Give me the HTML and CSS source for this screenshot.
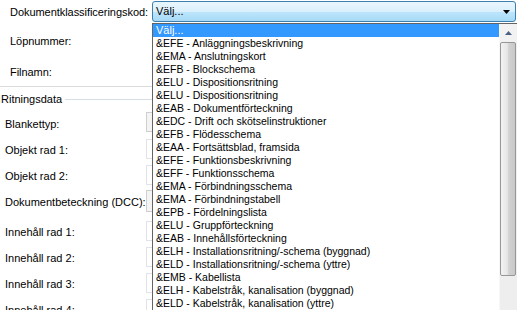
FILE: index.html
```html
<!DOCTYPE html>
<html>
<head>
<meta charset="utf-8">
<link rel="stylesheet" href="styles.css">
</head>
<body>
<div class="form">
  <div class="row r1">
    <span class="lbl top-lbl">Dokumentklassificeringskod:</span>
    <div class="combo">
      <span class="combo-text">Välj...</span>
      <svg class="arrow" width="7" height="4" viewBox="0 0 7 4"><path d="M0 0H7L3.5 4Z" fill="#000"/></svg>
    </div>
  </div>
  <div class="row r2">
    <span class="lbl top-lbl">Löpnummer:</span>
  </div>
  <div class="row r3">
    <span class="lbl top-lbl">Filnamn:</span>
  </div>
  <div class="sep"></div>
  <div class="group">
    <div class="legend"><span class="legend-text">Ritningsdata</span><span class="legend-line"></span></div>
    <div class="grow"><span class="lbl in-lbl">Blankettyp:</span><span class="field grey"></span></div>
    <div class="grow"><span class="lbl in-lbl">Objekt rad 1:</span><span class="field"></span></div>
    <div class="grow"><span class="lbl in-lbl">Objekt rad 2:</span><span class="field"></span></div>
    <div class="grow"><span class="lbl in-lbl">Dokumentbeteckning (DCC):</span><span class="field grey tall"></span></div>
    <div class="grow gap"><span class="lbl in-lbl">Innehåll rad 1:</span><span class="field"></span></div>
    <div class="grow"><span class="lbl in-lbl">Innehåll rad 2:</span><span class="field"></span></div>
    <div class="grow"><span class="lbl in-lbl">Innehåll rad 3:</span><span class="field"></span></div>
    <div class="grow"><span class="lbl in-lbl">Innehåll rad 4:</span><span class="field"></span></div>
  </div>
</div>

<div class="dropdown">
  <ul class="items">
    <li class="sel">Välj...</li>
    <li>&amp;EFE - Anläggningsbeskrivning</li>
    <li>&amp;EMA - Anslutningskort</li>
    <li>&amp;EFB - Blockschema</li>
    <li>&amp;ELU - Dispositionsritning</li>
    <li>&amp;ELU - Dispositionsritning</li>
    <li>&amp;EAB - Dokumentförteckning</li>
    <li>&amp;EDC - Drift och skötselinstruktioner</li>
    <li>&amp;EFB - Flödesschema</li>
    <li>&amp;EAA - Fortsättsblad, framsida</li>
    <li>&amp;EFE - Funktionsbeskrivning</li>
    <li>&amp;EFF - Funktionsschema</li>
    <li>&amp;EMA - Förbindningsschema</li>
    <li>&amp;EMA - Förbindningstabell</li>
    <li>&amp;EPB - Fördelningslista</li>
    <li>&amp;ELU - Gruppförteckning</li>
    <li>&amp;EAB - Innehållsförteckning</li>
    <li>&amp;ELH - Installationsritning/-schema (byggnad)</li>
    <li>&amp;ELD - Installationsritning/-schema (yttre)</li>
    <li>&amp;EMB - Kabellista</li>
    <li>&amp;ELH - Kabelstråk, kanalisation (byggnad)</li>
    <li>&amp;ELD - Kabelstråk, kanalisation (yttre)</li>
  </ul>
  <div class="scrollbar">
    <div class="sb-up"><svg width="7" height="4" viewBox="0 0 7 4"><path d="M0 4H7L3.5 0Z" fill="#4d6185"/></svg></div>
    <div class="sb-thumb"></div>
    <div class="sb-track"></div>
  </div>
</div>
</body>
</html>
```

FILE: styles.css
```css
html, body {
  margin: 0;
  padding: 0;
  background: #ffffff;
  width: 517px;
  height: 310px;
  overflow: hidden;
  font-family: "Liberation Sans", Arial, sans-serif;
  font-size: 11px;
  color: #000;
}

.form {
  display: flex;
  flex-direction: column;
  width: 517px;
}

.row {
  display: flex;
  align-items: flex-start;
}
.r1 { height: 29px; }
.r2 { height: 31px; }
.r3 { height: 26px; }

.lbl {
  line-height: 13px;
  white-space: nowrap;
}
.top-lbl {
  padding-top: 6px;
  padding-left: 10px;
  width: 152px;
  flex: none;
  box-sizing: border-box;
  letter-spacing: -0.05px;
}

.combo {
  margin-top: 1px;
  width: 364px;
  height: 21px;
  box-sizing: border-box;
  border: 1px solid #3c7fb1;
  border-radius: 3px;
  background: linear-gradient(to bottom, #eaf6fd 0%, #d9f0fc 50%, #bee6fd 51%, #a7d9f5 100%);
  display: flex;
  align-items: center;
  justify-content: space-between;
  padding: 0 5px 0 3px;
}
.combo-text {
  line-height: 13px;
}
.arrow { display: block; }

.sep {
  height: 1px;
  width: 152px;
  background: #dcdcdc;
}

.group {
  display: flex;
  flex-direction: column;
  margin-top: 6px;
}
.legend {
  display: flex;
  align-items: center;
  height: 13px;
  width: 152px;
}
.legend-text {
  line-height: 13px;
  padding-left: 1px;
  padding-right: 3px;
}
.legend-line {
  flex: 1;
  height: 1px;
  background: #d5dfe5;
}

.grow {
  display: flex;
  align-items: flex-start;
  height: 26px;
}
.grow:nth-child(2) { margin-top: 5px; }
.grow.gap { margin-top: 4px; }

.in-lbl {
  padding-top: 7px;
  padding-left: 5px;
  width: 146px;
  flex: none;
  box-sizing: border-box;
}
.field {
  display: block;
  width: 200px;
  height: 20px;
  box-sizing: border-box;
  border: 1px solid #e2e3ea;
  background: #fff;
  margin-top: 2px;
}
.field.grey {
  background: #f4f4f4;
  border-color: #cfcfcf;
  margin-top: 1px;
  height: 20px;
}
.field.tall { height: 22px; }

.dropdown {
  position: absolute;
  left: 152px;
  top: 23px;
  width: 366px;
  height: 300px;
  box-sizing: border-box;
  border: 1px solid #646464;
  background: #fff;
  display: flex;
}
.items {
  list-style: none;
  margin: 0;
  padding: 0;
  flex: 1;
  font-size: 10.5px;
}
.items li {
  height: 13px;
  line-height: 13px;
  padding-left: 3px;
  white-space: nowrap;
}
.items li.sel {
  background: #3399ff;
  color: #fff;
  font-size: 11px;
}

.scrollbar {
  width: 17px;
  display: flex;
  flex-direction: column;
  background: #f0f0f0;
  border-left: 1px solid #f7f7f7;
}
.sb-up {
  height: 17px;
  display: flex;
  align-items: center;
  justify-content: center;
  background: #f2f2f2;
}
.sb-thumb {
  height: 234px;
  margin: 1px 1px 0 0;
  box-sizing: border-box;
  border: 1px solid #979797;
  border-radius: 2px;
  background: linear-gradient(to right, #f2f2f2 0%, #e6e6e6 45%, #d2d2d2 55%, #c8c8c8 100%);
}
.sb-track {
  flex: 1;
  background: #eeeeee;
}
```
